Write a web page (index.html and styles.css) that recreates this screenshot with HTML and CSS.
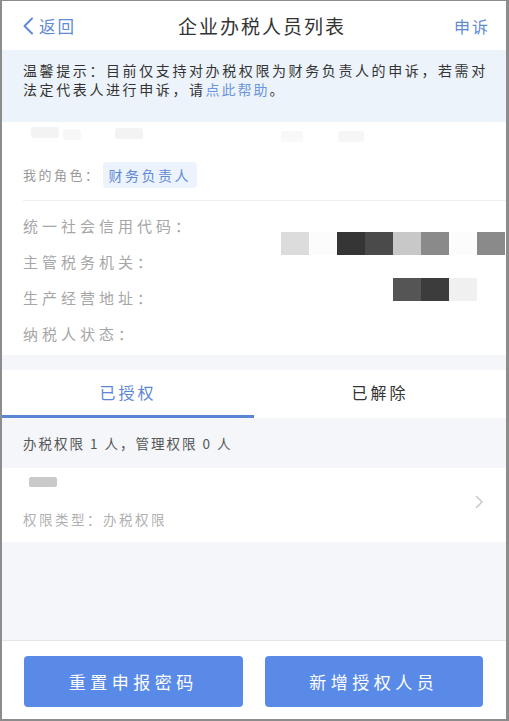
FILE: index.html
```html
<!DOCTYPE html>
<html lang="zh-CN">
<head>
    <meta charset="UTF-8">
    <meta name="viewport" content="width=device-width, initial-scale=1.0">
    <title>企业办税人员列表</title>
    <link rel="stylesheet" href="styles.css">
</head>
<body>
<div class="frame">

    <header class="nav">
        <a class="back">
            <svg width="12" height="18" viewBox="0 0 12 18"><polyline points="10,1.5 2.5,9 10,16.5" fill="none" stroke="#5f8ad6" stroke-width="2" stroke-linecap="round" stroke-linejoin="round"/></svg>
            <span>返回</span>
        </a>
        <h1 class="title">企业办税人员列表</h1>
        <a class="appeal">申诉</a>
    </header>

    <div class="notice">温馨提示：目前仅支持对办税权限为财务负责人的申诉，若需对法定代表人进行申诉，请<a class="link">点此帮助</a>。</div>

    <section class="company">
        <div class="ghost">
            <span class="g1"></span><span class="g2"></span><span class="g3"></span><span class="g4"></span><span class="g5"></span>
        </div>
        <div class="role">
            <span class="role-label">我的角色：</span>
            <span class="tag">财务负责人</span>
        </div>
        <div class="fields">
            <div class="field">统一社会信用代码：</div>
            <div class="field">主管税务机关：</div>
            <div class="field">生产经营地址：</div>
            <div class="field">纳税人状态：</div>

            <!-- blurred values -->
            <div class="mosaic m1">
                <i class="c-ddd"></i><i class="c-fff"></i><i class="c-333"></i><i class="c-444"></i><i class="c-ccc"></i><i class="c-888"></i><i class="c-fff"></i><i class="c-888"></i>
            </div>
            <div class="mosaic m2">
                <i class="c-555"></i><i class="c-3a3"></i><i class="c-eee"></i>
            </div>
        </div>
    </section>

    <nav class="tabs">
        <div class="tab active">已授权</div>
        <div class="tab">已解除</div>
    </nav>

    <div class="summary">办税权限 1 人，管理权限 0 人</div>

    <div class="item">
        <div class="item-body">
            <div class="name"></div>
            <div class="type">权限类型：办税权限</div>
        </div>
        <svg class="chev" width="9" height="14" viewBox="0 0 9 14"><polyline points="1.5,1.5 7,7 1.5,12.5" fill="none" stroke="#c8c8c8" stroke-width="1.5" stroke-linecap="round" stroke-linejoin="round"/></svg>
    </div>

    <div class="spacer"></div>

    <footer class="footer">
        <button class="btn">重置申报密码</button>
        <button class="btn">新增授权人员</button>
    </footer>

</div>
</body>
</html>
```

FILE: styles.css
```css
* {
    box-sizing: border-box;
}
body {
    margin: 0;
    font-family: "Noto Sans CJK SC", "Noto Sans", sans-serif;
    background: #fff;
}
.frame {
    width: 509px;
    height: 721px;
    display: flex;
    flex-direction: column;
    border-style: solid;
    border-color: #8c8c8c;
    border-width: 1px 3px 2px 2px;
    background: #f4f6f9;
    overflow: hidden;
}

/* top bar */
.nav {
    height: 49px;
    display: flex;
    align-items: center;
    justify-content: space-between;
    padding: 0 16px 0 20px;
    background: #fff;
}
.back {
    display: flex;
    align-items: center;
    gap: 5px;
    color: #5f8ad6;
    font-size: 16.5px;
    letter-spacing: 2px;
}
.title {
    margin: 0 0 0 -6px;
    font-size: 19px;
    font-weight: normal;
    letter-spacing: 2px;
    color: #333;
}
.appeal {
    color: #5f8ad6;
    font-size: 16px;
    letter-spacing: 2px;
}

/* notice */
.notice {
    height: 72px;
    background: #edf3fb;
    padding: 11px 10px 0 21px;
    font-size: 14px;
    line-height: 19px;
    letter-spacing: 2.6px;
    color: #333;
}
.link {
    color: #6b95dc;
    letter-spacing: 2px;
}

/* company block */
.company {
    background: #fff;
    padding-left: 21px;
}
.ghost {
    height: 27px;
    position: relative;
}
.ghost span {
    position: absolute;
    height: 11px;
    border-radius: 3px;
    background: #f3f3f3;
}
.g1 { left: 8px; top: 5px; width: 28px; }
.g2 { left: 40px; top: 7px; width: 18px; background: #f7f7f7 !important; }
.g3 { left: 92px; top: 6px; width: 28px; }
.g4 { left: 258px; top: 9px; width: 22px; background: #f8f8f8 !important; }
.g5 { left: 315px; top: 9px; width: 26px; background: #f6f6f6 !important; }

.role {
    height: 52px;
    display: flex;
    align-items: center;
    border-bottom: 1px solid #eeeeee;
}
.role-label {
    font-size: 13px;
    letter-spacing: 2.5px;
    color: #9a9a9a;
}
.tag {
    margin-left: 2px;
    height: 26px;
    line-height: 26px;
    padding: 0 6px;
    border-radius: 4px;
    background: #edf3fc;
    color: #5f8ad6;
    font-size: 14px;
    letter-spacing: 2.5px;
}
.fields {
    position: relative;
    padding: 7px 0 3px;
}
.field {
    height: 36px;
    line-height: 36px;
    font-size: 15px;
    letter-spacing: 4px;
    color: #a6a6a6;
}
.mosaic {
    position: absolute;
    display: flex;
    height: 23px;
}
.mosaic i {
    width: 28px;
    height: 23px;
}
.m1 { left: 258px; top: 31px; }
.m2 { left: 370px; top: 77px; }
.c-ddd { background: #dcdcdc; }
.c-fff { background: #fcfcfc; }
.c-333 { background: #353535; }
.c-444 { background: #4a4a4a; }
.c-ccc { background: #c8c8c8; }
.c-888 { background: #8a8a8a; }
.c-555 { background: #555; }
.c-3a3 { background: #3c3c3c; }
.c-eee { background: #f0f0f0; }

/* tabs */
.tabs {
    margin-top: 15px;
    display: flex;
    background: #fff;
}
.tab {
    flex: 1;
    height: 48px;
    line-height: 45px;
    text-align: center;
    font-size: 16px;
    letter-spacing: 3px;
    color: #333;
    border-bottom: 3px solid transparent;
}
.tab.active {
    color: #5b86d6;
    border-bottom-color: #5b86d6;
}

.summary {
    height: 50px;
    line-height: 50px;
    padding-left: 21px;
    font-size: 13.5px;
    letter-spacing: 2px;
    color: #555;
}

.item {
    height: 74px;
    display: flex;
    align-items: center;
    justify-content: space-between;
    background: #fff;
    padding: 0 22px 0 21px;
}
.item-body {
    align-self: stretch;
    padding-top: 9px;
}
.name {
    margin-left: 6px;
    width: 28px;
    height: 10px;
    border-radius: 2px;
    background: #c9c9c9;
}
.type {
    margin-top: 22px;
    font-size: 13.5px;
    letter-spacing: 2.5px;
    color: #b0b0b0;
}
.chev {
    margin-bottom: 6px;
}

.spacer {
    flex: 1;
}

/* bottom bar */
.footer {
    display: flex;
    gap: 22px;
    padding: 15px 23px 12px 22px;
    background: #fff;
    border-top: 1px solid #e6e6e6;
}
.btn {
    flex: 1;
    height: 51px;
    border: none;
    border-radius: 4px;
    background: #5a8ae8;
    color: #fff;
    font-family: inherit;
    font-size: 17px;
    letter-spacing: 4.5px;
}
```
